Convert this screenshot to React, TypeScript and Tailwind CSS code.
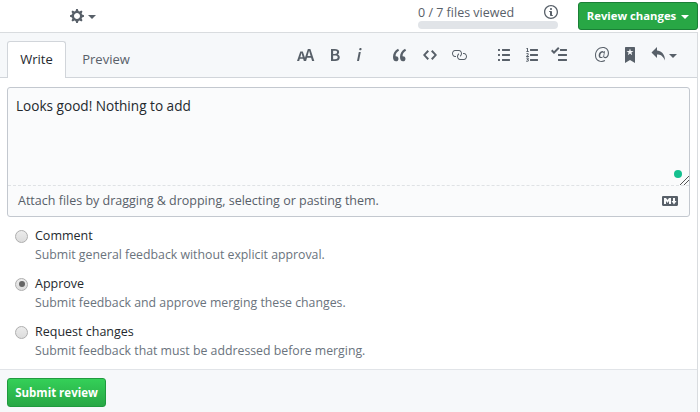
const sans = { fontFamily: '"Open Sans", "Noto Sans", sans-serif' };

const paths = {
  gear: 'M14 8.77v-1.6l-1.94-.64-.45-1.09.88-1.84-1.13-1.13-1.81.91-1.09-.45-.69-1.92h-1.6l-.63 1.94-1.11.45-1.84-.88-1.13 1.13.91 1.81-.45 1.09L0 7.23v1.59l1.94.64.45 1.09-.88 1.84 1.13 1.13 1.81-.91 1.09.45.69 1.92h1.59l.63-1.94 1.11-.45 1.84.88 1.13-1.13-.92-1.81.47-1.09L14 8.75v.02zM7 11c-1.66 0-3-1.34-3-3s1.34-3 3-3 3 1.34 3 3-1.34 3-3 3z',
  info: 'M6.3 5.69a.942.942 0 01-.28-.7c0-.28.09-.52.28-.7.19-.18.42-.28.7-.28.28 0 .52.09.7.28.18.19.28.42.28.7 0 .28-.09.52-.28.7a1 1 0 01-.7.3c-.28 0-.52-.11-.7-.3zM8 7.99c-.02-.25-.11-.48-.31-.69-.2-.19-.42-.3-.69-.31H6c-.27.02-.48.13-.69.31-.2.2-.3.44-.31.69h1v3c.02.27.11.5.31.69.2.2.42.31.69.31h1c.27 0 .48-.11.69-.31.2-.19.3-.42.31-.69H8V7.98v.01zM7 2.3c-3.14 0-5.7 2.54-5.7 5.68 0 3.14 2.56 5.7 5.7 5.7s5.7-2.55 5.7-5.7c0-3.15-2.56-5.69-5.7-5.69v.01zM7 .98c3.86 0 7 3.14 7 7s-3.14 7-7 7-7-3.12-7-7 3.14-7 7-7z',
  textSize: 'M13.62 9.08L12.1 3.66h-.06l-1.5 5.42h3.08zM5.7 10.13S4.68 6.52 4.53 6.02h-.08l-1.13 4.11H5.7zM17.31 14h-2.25l-.95-3.25h-4.07L9.09 14H6.84l-.69-2.33H2.87L2.17 14H0l3.3-9.59h2.5l2.17 6.34L10.86 2h2.52l3.94 12h-.01z',
  bold: 'M1 2h3.83c2.48 0 4.3.75 4.3 2.95 0 1.14-.63 2.23-1.67 2.61v.06c1.33.3 2.3 1.23 2.3 2.86 0 2.39-1.97 3.52-4.61 3.52H1V2zm3.66 4.95c1.67 0 2.38-.66 2.38-1.69 0-1.17-.78-1.61-2.34-1.61H3.13v3.3h1.53zm.27 5.39c1.77 0 2.75-.64 2.75-1.98 0-1.27-.95-1.81-2.75-1.81h-1.8v3.8h1.8v-.01z',
  italic: 'M2.81 5h1.98L3 14H1l1.81-9zm.36-2.7c0-.7.58-1.3 1.33-1.3.56 0 1.13.38 1.13 1.03 0 .75-.59 1.3-1.33 1.3-.58 0-1.13-.38-1.13-1.03z',
  quote: 'M6.16 3.5C3.73 5.06 2.55 6.67 2.55 9.36c.16-.05.3-.05.44-.05 1.27 0 2.5.86 2.5 2.41 0 1.61-1.03 2.61-2.5 2.61-1.9 0-2.99-1.52-2.99-4.25 0-3.8 1.75-6.53 5.02-8.42L6.16 3.5zm7 0c-2.43 1.56-3.61 3.17-3.61 5.86.16-.05.3-.05.44-.05 1.27 0 2.5.86 2.5 2.41 0 1.61-1.03 2.61-2.5 2.61-1.89 0-2.98-1.52-2.98-4.25 0-3.8 1.75-6.53 5.02-8.42l1.14 1.84h-.01z',
  code: 'M9.5 3L8 4.5 11.5 8 8 11.5 9.5 13 14 8 9.5 3zm-5 0L0 8l4.5 5L6 11.5 2.5 8 6 4.5 4.5 3z',
  link: 'M4 9h1v1H4c-1.5 0-3-1.69-3-3.5S2.55 3 4 3h4c1.45 0 3 1.69 3 3.5 0 1.41-.91 2.72-2 3.25V8.59c.58-.45 1-1.27 1-2.09C10 5.22 8.98 4 8 4H4c-.98 0-2 1.22-2 2.5S3 9 4 9zm9-3h-1v1h1c1 0 2 1.22 2 2.5S13.98 12 13 12H9c-.98 0-2-1.22-2-2.5 0-.83.42-1.64 1-2.09V6.25c-1.09.53-2 1.84-2 3.25C6 11.31 7.55 13 9 13h4c1.45 0 3-1.69 3-3.5S14.5 6 13 6z',
  listUl: 'M2 13c0 .59 0 1-.59 1H.59C0 14 0 13.59 0 13c0-.59 0-1 .59-1h.81c.59 0 .59.41.59 1H2zm2.59-9h6.81c.59 0 .59-.41.59-1 0-.59 0-1-.59-1H4.59C4 2 4 2.41 4 3c0 .59 0 1 .59 1zM1.41 7H.59C0 7 0 7.41 0 8c0 .59 0 1 .59 1h.81c.59 0 .59-.41.59-1 0-.59 0-1-.59-1h.01zm0-5H.59C0 2 0 2.41 0 3c0 .59 0 1 .59 1h.81c.59 0 .59-.41.59-1 0-.59 0-1-.59-1h.01zm10 5H4.59C4 7 4 7.41 4 8c0 .59 0 1 .59 1h6.81c.59 0 .59-.41.59-1 0-.59 0-1-.59-1h.01zm0 5H4.59C4 12 4 12.41 4 13c0 .59 0 1 .59 1h6.81c.59 0 .59-.41.59-1 0-.59 0-1-.59-1h.01z',
  listOl: 'M12.01 13c0 .59 0 1-.59 1H4.6c-.59 0-.59-.41-.59-1 0-.59 0-1 .59-1h6.81c.59 0 .59.41.59 1h.01zM4.6 4h6.81C12 4 12 3.59 12 3c0-.59 0-1-.59-1H4.6c-.59 0-.59.41-.59 1 0 .59 0 1 .59 1zm6.81 3H4.6c-.59 0-.59.41-.59 1 0 .59 0 1 .59 1h6.81C12 9 12 8.59 12 8c0-.59 0-1-.59-1zm-9.4-6h-.72c-.3.19-.58.25-1.03.34V2h.75v2.14H.17V5h2.84v-.86h-1V1zm.19 8.12c-.17 0-.45.03-.66.06.53-.56 1.14-1.25 1.14-1.89C2.67 6.52 2.16 6 1.38 6 .82 6 .45 6.19.07 6.59l.58.58c.19-.19.38-.38.64-.38.28 0 .47.16.47.52 0 .53-.77 1.2-1.7 2.06V10h3v-.88h-.86zm-.06 3.46v-.03c.44-.19.64-.47.64-.86 0-.7-.56-1.11-1.44-1.11-.48 0-.89.19-1.28.52l.55.64c.25-.2.44-.31.69-.31.27 0 .42.13.42.36 0 .27-.2.44-.86.44v.75c.83 0 .98.17.98.47 0 .25-.23.38-.58.38-.28 0-.56-.14-.81-.38l-.48.66c.3.36.77.56 1.41.56.83 0 1.53-.41 1.53-1.16-.02-.45-.3-.73-.77-.89v-.04z',
  tasklist: 'M15.41 9H7.59C7 9 7 8.59 7 8c0-.59 0-1 .59-1h7.81c.59 0 .59.41.59 1 0 .59 0 1-.59 1h.01zM9.59 4C9 4 9 3.59 9 3c0-.59 0-1 .59-1h5.81c.59 0 .59.41.59 1 0 .59 0 1-.59 1H9.59zM0 3.91l1.41-1.3L3 4.2 7.09 0 8.5 1.41 3 6.91l-3-3zM7.59 12h7.81c.59 0 .59.41.59 1 0 .59 0 1-.59 1H7.59C7 14 7 13.59 7 13c0-.59 0-1 .59-1z',
  mention: 'M6.58 15c1.25 0 2.52-.31 3.56-.94l-.42-.94c-.84.52-1.89.83-3.03.83-3.23 0-5.64-2.08-5.64-5.72 0-4.37 3.23-7.18 6.58-7.18 3.45 0 5.22 2.19 5.22 5.2 0 2.39-1.34 3.86-2.5 3.86-1.05 0-1.36-.73-1.05-2.19l.73-3.75H8.98l-.11.72c-.41-.63-.94-.83-1.56-.83-2.19 0-3.66 2.39-3.66 4.38 0 1.67.94 2.61 2.3 2.61.84 0 1.67-.53 2.3-1.25.11.94.94 1.45 1.98 1.45 1.67 0 3.77-1.67 3.77-5C14 2.61 11.59 0 7.83 0 3.66 0 0 3.33 0 8.33 0 12.71 2.92 15 6.58 15zm-.31-5c-.73 0-1.06-.52-1.06-1.25 0-1.25.94-3.15 2.61-3.15.52 0 .83.21 1.04.73l-.63 3.07c-.63.52-1.24.6-1.96.6z',
  bookmark: 'M9 0H1C.27 0 0 .27 0 1v15l5-3.09L10 16V1c0-.73-.27-1-1-1zm-.78 4.25L6.36 5.61l.72 2.16c.06.22-.02.28-.2.17L5 6.6 3.12 7.94c-.19.11-.25.05-.2-.17l.72-2.16-1.86-1.36c-.17-.16-.14-.23.09-.23l2.3-.03.7-2.16h.25l.7 2.16 2.3.03c.23 0 .27.08.09.23h.01z',
  reply: 'M6 3.5c3.92.44 8 3.125 8 10-2.312-5.062-4.75-6-8-6V11L.5 5.5 6 0v3.5z',
  markdown: 'M14.85 3H1.15C.52 3 0 3.52 0 4.15v7.69C0 12.48.52 13 1.15 13h13.69c.64 0 1.15-.52 1.15-1.15v-7.7C16 3.52 15.48 3 14.85 3zM9 11H7V8L5.5 9.92 4 8v3H2V5h2l1.5 2L7 5h2v6zm2.99.5L9.5 8H11V5h2v3h1.5l-2.51 3.5z',
};

function Octicon({ d, w, h = 16, vw, className }: { d: string; w: number; h?: number; vw?: number; className?: string }) {
  return (
    <svg width={w} height={h} viewBox={`0 0 ${vw ?? w} 16`} fill="currentColor" className={className}>
      <path fillRule="evenodd" d={d} />
    </svg>
  );
}

function Caret({ className }: { className?: string }) {
  return <span className={`inline-block h-0 w-0 border-x-4 border-t-4 border-x-transparent border-t-current ${className ?? ''}`} />;
}

function Radio({ checked }: { checked?: boolean }) {
  return (
    <span className="flex h-[13px] w-[13px] shrink-0 items-center justify-center rounded-full border border-[#aeaeae] bg-gradient-to-b from-[#ececec] to-[#dcdcdc]">
      {checked && <span className="h-[6px] w-[6px] rounded-full bg-[#666]" />}
    </span>
  );
}

function ReviewOption({ title, help, checked }: { title: string; help: string; checked?: boolean }) {
  return (
    <div className="flex h-[38px] items-start">
      <div className="flex h-[18px] w-[20px] items-center">
        <Radio checked={checked} />
      </div>
      <div>
        <div className="text-[12.5px] leading-[18px] text-[#24292e]">{title}</div>
        <div className="mt-px text-[12.3px] leading-[18px] text-[#6a737d]">{help}</div>
      </div>
    </div>
  );
}

export default function App() {
  return (
    <div className="h-[412px] w-[700px] overflow-hidden bg-white" style={sans}>
      {/* top bar */}
      <div className="flex h-[32px] items-start">
        <div className="ml-[70px] flex h-[32px] items-center gap-[4px] pb-[1px] text-[#586069]">
          <Octicon d={paths.gear} w={14} />
          <Caret className="mt-[2px]" />
        </div>
        <div className="ml-[322px] w-[140px] pt-[4px]">
          <div className="flex items-start justify-between text-[#586069]">
            <span className="text-[12.5px] leading-[17px]">0 / 7 files viewed</span>
            <Octicon d={paths.info} w={14} />
          </div>
          <div className="h-[8px] rounded-[4px] bg-[#e1e4e8]" />
        </div>
        <button className="ml-[20px] mt-[2px] flex h-[28px] w-[120px] items-center justify-center gap-[5px] rounded-[3px] border border-[#1b7f37] bg-[#28a745] text-[11.3px] font-bold text-white">
          Review changes
          <Caret className="mt-[2px]" />
        </button>
      </div>

      {/* review panel */}
      <div className="h-[380px] w-[698px] border-r border-t border-[#d9dcdf]">
        {/* toolbar and tabs */}
        <div className="flex h-[45px] items-end border-b border-[#d1d5da] bg-[#f6f8fa] pl-[7px]">
          <div className="-mb-px flex h-[37px] w-[59px] items-center justify-center rounded-t-[3px] border border-b-0 border-[#d1d5da] bg-white text-[13px] text-[#24292e]">
            Write
          </div>
          <div className="-mb-px flex h-[37px] w-[80px] items-center justify-center text-[13px] text-[#586069]">
            Preview
          </div>
          <div className="ml-[151px] flex h-[44px] items-center pb-[1px] text-[#586069]">
            <Octicon d={paths.textSize} w={18} />
            <Octicon d={paths.bold} w={10} className="ml-[15px]" />
            <Octicon d={paths.italic} w={6} className="ml-[16px]" />
            <Octicon d={paths.quote} w={14} className="ml-[31px]" />
            <Octicon d={paths.code} w={14} className="ml-[16px]" />
            <Octicon d={paths.link} w={16} className="ml-[14px]" />
            <Octicon d={paths.listUl} w={12} className="ml-[31px]" />
            <Octicon d={paths.listOl} w={13} className="ml-[16px]" />
            <Octicon d={paths.tasklist} w={16} className="ml-[12px]" />
            <Octicon d={paths.mention} w={14} className="ml-[28px]" />
            <Octicon d={paths.bookmark} w={10} className="ml-[16px]" />
            <Octicon d={paths.reply} w={14} className="ml-[16px]" />
            <Caret className="ml-[4px] mt-[3px]" />
          </div>
        </div>

        {/* comment box */}
        <div className="ml-[7px] mt-[9px] h-[130px] w-[683px] rounded-[3px] border border-[#c3c8cf] bg-[#fafbfc]">
          <div className="relative h-[98px] border-b border-dashed border-[#dfe2e5] px-[8px] pt-[8px] text-[13.6px] leading-[20px] text-[#24292e]">
            Looks good! Nothing to add
            <span className="absolute bottom-[7px] right-[7px] h-[8px] w-[8px] rounded-full bg-[#14c08f]" />
            <svg width="9" height="9" viewBox="0 0 9 9" className="absolute bottom-0 right-0 text-[#555]" stroke="currentColor" strokeWidth="1">
              <path d="M0 9L9 0M4 9L9 4" />
            </svg>
          </div>
          <div className="flex h-[30px] items-center justify-between pl-[10px] pr-[11px] text-[#586069]">
            <span className="text-[12.5px]">Attach files by dragging &amp; dropping, selecting or pasting them.</span>
            <Octicon d={paths.markdown} w={16} />
          </div>
        </div>

        {/* options */}
        <div className="ml-[15px] mt-[10px] flex flex-col gap-[10px]">
          <ReviewOption title="Comment" help="Submit general feedback without explicit approval." />
          <ReviewOption title="Approve" help="Submit feedback and approve merging these changes." checked />
          <ReviewOption title="Request changes" help="Submit feedback that must be addressed before merging." />
        </div>

        {/* footer */}
        <div className="mt-[8px] h-[50px] border-t border-[#e1e4e8] bg-[#f6f8fa] pl-[7px] pt-[8px]">
          <button className="flex h-[29px] w-[99px] items-center justify-center rounded-[3px] border border-[#1f9a3e] bg-gradient-to-b from-[#34d058] to-[#28a745] text-[11.5px] font-bold text-white">
            Submit review
          </button>
        </div>
      </div>
    </div>
  );
}
